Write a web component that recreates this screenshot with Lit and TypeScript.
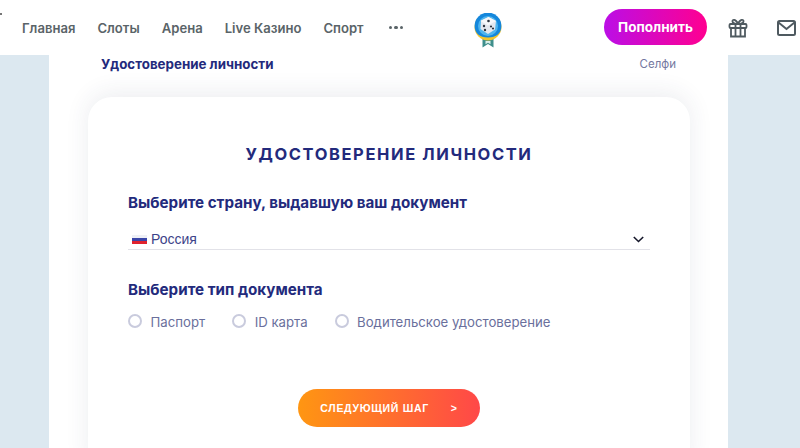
import { LitElement, css, html } from "lit";
import { customElement } from "lit/decorators.js";

const NAV = ["Главная", "Слоты", "Арена", "Live Казино", "Спорт"];
const DOCS = ["Паспорт", "ID карта", "Водительское удостоверение"];

@customElement("app-root")
export class AppRoot extends LitElement {
  static styles = css`
    :host {
      display: block;
      width: 800px;
      height: 448px;
      overflow: hidden;
      background: #dce8f0;
      font-family: Inter, "Noto Sans", sans-serif;
      color: #232a7c;
    }

    header {
      position: relative;
      height: 55px;
      background: #fff;
      display: flex;
      align-items: center;
      padding-left: 22px;
      box-sizing: border-box;
    }

    /* cut-off menu icon at the very edge */
    header::before {
      content: "";
      position: absolute;
      left: 0;
      top: 13px;
      width: 2px;
      height: 2px;
      background: #777;
    }

    nav {
      display: flex;
      align-items: center;
      gap: 22px;
      width: 452px;
      font-size: 13.1px;
      font-weight: 600;
      color: #5a6468;
    }

    .dots {
      display: flex;
      gap: 2px;
      margin-left: 3px;
    }

    .dots i {
      width: 3.5px;
      height: 3.5px;
      border-radius: 50%;
      background: #5a6468;
    }

    .logo {
      width: 28px;
      height: 35px;
      margin-top: 5px;
    }

    .deposit {
      margin-left: 102px;
      width: 103px;
      height: 36px;
      margin-top: -1px;
      border-radius: 18px;
      background: linear-gradient(90deg, #bb0ee6, #ff0090);
      color: #fff;
      font-size: 13.5px;
      font-weight: 700;
      display: flex;
      align-items: center;
      justify-content: center;
    }

    .gift {
      margin-left: 21px;
    }

    .mail {
      margin-left: 29px;
    }

    main {
      width: 679px;
      height: 393px;
      margin-left: 49px;
      box-sizing: border-box;
      background: #fff;
      padding-top: 1px;
    }

    .steps {
      display: flex;
      justify-content: space-between;
      align-items: center;
      height: 15px;
      padding: 0 52px;
      font-size: 11.5px;
      color: #74789f;
    }

    .steps b {
      font-size: 13.35px;
      font-weight: 700;
      color: #232a7c;
    }

    .card {
      width: 602px;
      height: 380px;
      margin: 26px 0 0 39px;
      padding: 47px 40px 0;
      box-sizing: border-box;
      background: #fff;
      border-radius: 24px;
      box-shadow: 0 -4px 24px rgba(40, 50, 90, 0.09);
    }

    h1 {
      margin: 0;
      text-align: center;
      font-size: 16.5px;
      line-height: 20px;
      font-weight: 700;
      letter-spacing: 1.6px;
    }

    h2 {
      margin: 0;
      font-size: 15.2px;
      line-height: 18px;
      font-weight: 700;
    }

    .country {
      margin-top: 30px;
    }

    .select {
      width: 522px;
      height: 29px;
      margin-top: 9px;
      padding: 8px 4px 0;
      box-sizing: border-box;
      border-bottom: 1.5px solid #e2e2e8;
      display: flex;
      align-items: center;
      gap: 4px;
      font-family: "Liberation Sans", Arial, sans-serif;
      font-size: 14px;
      color: #3d4389;
    }

    .flag {
      width: 15px;
      height: 9px;
      background: linear-gradient(#eef0f6 33%, #3a46a8 33% 66%, #e0222e 66%);
    }

    .select svg {
      margin-left: auto;
      margin-right: 2px;
    }

    .type {
      margin-top: 31px;
    }

    .radios {
      display: flex;
      margin-top: 15px;
      font-size: 13.2px;
      color: #6a6f9c;
      gap: 27px;
    }

    .radio {
      display: flex;
      align-items: center;
      gap: 8.5px;
    }

    .radio i {
      flex: none;
      width: 10px;
      height: 10px;
      margin-top: -3px;
      border: 2px solid #c9cbdd;
      border-radius: 50%;
    }

    .next {
      width: 182px;
      height: 38px;
      margin: 59px 0 0 170px;
      border-radius: 19px;
      background: linear-gradient(90deg, #ff9612, #ff4848);
      color: #fff;
      font-family: "Liberation Sans", Arial, sans-serif;
      font-size: 10.5px;
      font-weight: 700;
      letter-spacing: 0.7px;
      display: flex;
      align-items: center;
      justify-content: center;
      gap: 22px;
    }
  `;

  private logo() {
    return html`<svg class="logo" viewBox="0 0 28 35">
      <path d="M8.500 24v10.500l5.500-3.500 5.500 3.500V24z" fill="#3f8f8c" />
      <path d="M11.500 28v3.200l2.500-1.500 2.500 1.500V28z" fill="#dcefe9" />
      <circle cx="14" cy="14" r="13.500" fill="#f2c52e" />
      <path d="M.6 13a13.400 13.400 0 0 1 26.800 0c0 7-5 11.500-13.400 11.500S.6 20 .6 13z" fill="#1487dc" />
      <circle cx="14" cy="13" r="10" fill="#4fb5ee" />
      <path d="M14.500 4l7.500 4-1 8.500-7 4.500-7.500-5 .5-8.500z" fill="#e3e7ef" />
      <path d="M14.500 4l7.500 4-8 4.500-7.500-4.500z" fill="#f6f7fa" />
      <circle cx="14.500" cy="8" r="1.300" fill="#2d3440" />
      <circle cx="10" cy="13" r="1.200" fill="#2d3440" />
      <circle cx="11" cy="17" r="1.200" fill="#2d3440" />
      <circle cx="17" cy="13.500" r="1.100" fill="#2d3440" />
      <circle cx="19" cy="15.500" r="1.100" fill="#2d3440" />
    </svg>`;
  }

  render() {
    return html`
      <header>
        <nav>
          ${NAV.map((item) => html`<span>${item}</span>`)}
          <span class="dots"><i></i><i></i><i></i></span>
        </nav>
        ${this.logo()}
        <div class="deposit">Пополнить</div>
        <svg class="gift" width="20" height="20" viewBox="0 0 20 20" fill="none" stroke="#4f5a60" stroke-width="1.800">
          <rect x="1.500" y="6" width="17" height="4" rx="1" />
          <path d="M3 10v8.500h14V10M7.500 6v12.500M12.500 6v12.500" />
          <path d="M10 6C8 1 4 1 4.500 3.500 4.800 5.500 8 6 10 6zM10 6c2-5 6-5 5.500-2.500C15.200 5.500 12 6 10 6z" />
        </svg>
        <svg class="mail" width="19" height="16" viewBox="0 0 19 16" fill="none" stroke="#4f5a60" stroke-width="2">
          <rect x="1" y="1" width="17" height="14" rx="1.500" />
          <path d="M1.500 2.500L9.500 9l8-6.500" />
        </svg>
      </header>
      <main>
        <div class="steps">
          <b>Удостоверение личности</b>
          <span>Селфи</span>
        </div>
        <section class="card">
          <h1>УДОСТОВЕРЕНИЕ ЛИЧНОСТИ</h1>
          <h2 class="country">Выберите страну, выдавшую ваш документ</h2>
          <div class="select">
            <span class="flag"></span>
            <span>Россия</span>
            <svg width="11" height="7" viewBox="0 0 11 7" fill="none" stroke="#15172a" stroke-width="1.600">
              <path d="M.8 1l4.700 4.500L10.200 1" />
            </svg>
          </div>
          <h2 class="type">Выберите тип документа</h2>
          <div class="radios">
            ${DOCS.map((doc) => html`<label class="radio"><i></i>${doc}</label>`)}
          </div>
          <div class="next"><span>СЛЕДУЮЩИЙ ШАГ</span><span>&gt;</span></div>
        </section>
      </main>
    `;
  }
}
